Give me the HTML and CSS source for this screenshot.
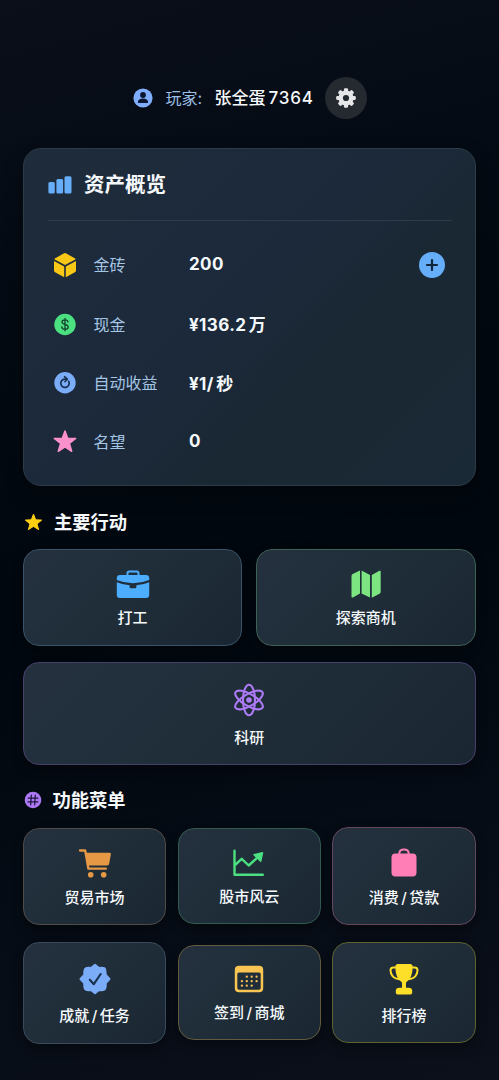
FILE: index.html
```html
<!DOCTYPE html>
<html lang="zh-CN">
<head>
<meta charset="utf-8">
<meta name="viewport" content="width=device-width, initial-scale=1">
<title>资产概览</title>
<link rel="stylesheet" href="styles.css">
</head>
<body>
<main class="screen">
  <header class="player">
    <svg class="avatar" viewBox="0 0 20 20"><circle cx="10" cy="10" r="9.6" fill="#80adfb"/><circle cx="10" cy="7" r="2.9" fill="#0b1730"/><path d="M4.900 14.200c0-2.200 2.200-3.600 5.100-3.600s5.100 1.400 5.100 3.600c0 .5-.3.7-.8.7H5.700c-.5 0-.8-.2-.8-.7z" fill="#0b1730"/></svg>
    <span class="player-label">玩家:</span>
    <span class="player-name">张全蛋<span class="player-id">7364</span></span>
    <button class="settings" aria-label="设置">
      <svg width="20" height="20" viewBox="-10 -10 20 20" fill="#e5e6e7"><path fill-rule="evenodd" d="M0-7.600A7.600 7.600 0 1 1 0 7.600A7.600 7.600 0 1 1 0-7.600zM0-3.100A3.100 3.100 0 1 0 0 3.100A3.100 3.100 0 1 0 0-3.100z"/><g id="teeth"><rect x="-2.100" y="-9.800" width="4.200" height="4" rx="1.300"/><rect x="-2.100" y="5.800" width="4.200" height="4" rx="1.300"/><rect x="-9.800" y="-2.100" width="4" height="4.200" rx="1.300"/><rect x="5.800" y="-2.100" width="4" height="4.200" rx="1.300"/></g><use href="#teeth" transform="rotate(45)"/></svg>
    </button>
  </header>

  <section class="assets">
    <h1 class="assets-title">
      <svg width="24" height="20" viewBox="0 0 24 20" fill="#66adfa"><rect x=".4" y="7" width="6.400" height="11.500" rx="1.500"/><rect x="8.400" y="4" width="6.700" height="14.500" rx="1.500"/><rect x="16.500" y="1.200" width="7" height="17.300" rx="1.500"/></svg>
      <span>资产概览</span>
    </h1>
    <div class="row row-gold">
      <svg viewBox="0 0 26 26" fill="#f9c715"><path d="M12.100 1.300q.9-.5 1.800 0l9.300 5.200q.7.500 0 .9L13 12.900 2.800 7.400q-.7-.4 0-.9z"/><path d="M2 9l10.200 5.600v10.700L3.100 20.200Q2 19.600 2 18.500zM24 9l-10.200 5.600v10.700l9.100-5.100q1.100-.6 1.100-1.700z"/></svg>
      <span class="row-label">金砖</span><span class="row-value">200</span>
      <button class="add" aria-label="增加"><svg width="26" height="26" viewBox="0 0 26 26"><path d="M13 8v10M8 13h10" stroke="#12273a" stroke-width="2.200" stroke-linecap="round"/></svg></button>
    </div>
    <div class="row row-cash">
      <svg viewBox="0 0 26 26"><circle cx="13" cy="13.500" r="10.700" fill="#4be080"/><path d="M16 10.800C15.800 9.400 14.600 8.800 13 8.800c-1.800 0-3 .8-3 2.200 0 3.400 6.200 1.500 6.200 5 0 1.500-1.300 2.300-3.200 2.300s-3.100-.9-3.300-2.400M13 7.300v12.500" fill="none" stroke="#17462f" stroke-width="1.300" stroke-linecap="round"/></svg>
      <span class="row-label">现金</span><span class="row-value">¥136.2<span class="unit">万</span></span>
    </div>
    <div class="row row-income">
      <svg viewBox="0 0 26 26"><circle cx="13" cy="12.700" r="10.700" fill="#7bacf8"/><path d="M16.700 11.300a4.200 4.200 0 1 1-4.400-2.200h2" fill="none" stroke="#18304f" stroke-width="1.700" stroke-linecap="round"/><path d="M12.500 6.700L15.300 9.200 12.900 11.700" fill="none" stroke="#18304f" stroke-width="1.600" stroke-linecap="round" stroke-linejoin="round"/></svg>
      <span class="row-label">自动收益</span><span class="row-value">¥1/<span class="unit">秒</span></span>
    </div>
    <div class="row row-fame">
      <svg viewBox="0 0 26 26"><path d="M13 2.900l2.700 7.300 8 .3-6.300 4.900 2.300 7.900-6.700-4.500-6.700 4.500 2.300-7.900-6.300-4.900 8-.3z" fill="#fb91cc" stroke="#fb91cc" stroke-width="1.500" stroke-linejoin="round"/></svg>
      <span class="row-label">名望</span><span class="row-value">0</span>
    </div>
  </section>

  <h2 class="heading heading-actions">
    <svg width="19" height="19" viewBox="0 0 19 19"><path d="M9.500 1.200l2.200 5.600 6 .3-4.700 3.800 1.700 5.800-5.200-3.300-5.200 3.300L6 10.900 1.300 7.100l6-.3z" fill="#ffcf12" stroke="#ffcf12" stroke-linejoin="round"/></svg>
    <span>主要行动</span>
  </h2>
  <div class="actions">
    <a class="tile work"><svg viewBox="0 0 34 34"><path d="M11.500 8V6.200q0-1.700 1.700-1.700h7.600q1.700 0 1.700 1.700V8" fill="none" stroke="#4dadff" stroke-width="2"/><path d="M4 8h26q3.200 0 3.200 3v1.900Q25.500 16.200 17 16.200T.8 12.900V11Q.8 8 4 8z" fill="#4dadff"/><path d="M.8 15.200Q7 17.800 13.600 18.200V20q0 1.200 1.200 1.200h4.400q1.200 0 1.200-1.200v-1.800Q27 17.800 33.200 15.200V28q0 3-3 3H3.800q-3 0-3-3z" fill="#4dadff"/></svg><span>打工</span></a>
    <a class="tile explore"><svg viewBox="0 0 34 34" fill="#7ce480"><path d="M2.500 9q0-1.400 1.200-2l7.300-3.600v23.200l-7.100 3.800q-1.400.5-1.400-1z"/><path d="M12.600 3.500L21 8v22.500l-8.400-4z"/><path d="M22.800 8l7.600-4.200q1.300-.5 1.300 1v19.900q0 1.300-1.200 2l-7.700 4z"/></svg><span>探索商机</span></a>
    <a class="tile research"><svg viewBox="0 0 34 34" fill="none" stroke="#ad7af5" stroke-width="2.100"><ellipse cx="17" cy="17" rx="6" ry="15.300"/><ellipse cx="17" cy="17" rx="6" ry="15.600" transform="rotate(60 17 17)"/><ellipse cx="17" cy="17" rx="6" ry="15.600" transform="rotate(-60 17 17)"/><circle cx="17" cy="17" r="2.800" fill="#ad7af5" stroke="none"/></svg><span>科研</span></a>
  </div>

  <h2 class="heading heading-menu">
    <svg width="18" height="18" viewBox="0 0 18 18"><circle cx="9" cy="9" r="8.300" fill="#ad79f4"/><path d="M7.300 4.200L6.700 13.800M11.300 4.200l-.6 9.600M4.200 7.100h9.800M4 10.900h9.800" stroke="#1a1438" stroke-width="1.200" stroke-linecap="round"/></svg>
    <span>功能菜单</span>
  </h2>
  <div class="menu">
    <a class="tile trade"><svg viewBox="0 0 34 34"><path d="M2 4.500h5.200l3.200 18.200h17.500" fill="none" stroke="#e69845" stroke-width="2.300" stroke-linecap="round" stroke-linejoin="round"/><path d="M7.300 6.700h24.400q1.500 0 1.200 1.600l-1.700 9.200q-.3 1.900-2 1.900H9.700z" fill="#e69845"/><circle cx="12.700" cy="28.700" r="2.800" fill="#e69845"/><circle cx="25.700" cy="28.700" r="2.800" fill="#e69845"/></svg><span>贸易市场</span></a>
    <a class="tile stocks"><svg viewBox="0 0 34 34" fill="none" stroke="#4be080" stroke-width="2.400" stroke-linecap="round" stroke-linejoin="round"><path d="M2.500 4.700v24.100h28.300M3.500 18.500l6.200-5.700 7 6.700L26 11"/><path d="M22 8.700l8.500-1.900-1.800 8.400z" fill="#4be080" stroke-width="1.500"/></svg><span>股市风云</span></a>
    <a class="tile spend"><svg viewBox="0 0 34 34"><path d="M12.300 9V7.800c0-2.700 2-4.300 4.700-4.300s4.700 1.600 4.700 4.300V9" fill="none" stroke="#ff7eb6" stroke-width="2"/><rect x="4.500" y="7.400" width="25" height="23.200" rx="4" fill="#ff7eb6"/></svg><span>消费<i>/</i>贷款</span></a>
    <a class="tile tasks"><svg viewBox="0 0 34 34"><path d="M17 2.800l4 3.300q5.500-.8 6 .9t.8 6l3.700 4-3.700 4q.2 4.300-.8 6t-6 .9l-4 3.300-4-3.300q-5 .8-6-.9t-.8-6l-3.700-4 3.700-4q-.2-4.300.8-6t6-.9z" fill="#7bacf8" stroke="#7bacf8" stroke-width="2" stroke-linejoin="round"/><path d="M11.800 17.700l4 4.500L22.700 12" fill="none" stroke="#19304b" stroke-width="2.100" stroke-linecap="round" stroke-linejoin="round"/></svg><span>成就<i>/</i>任务</span></a>
    <a class="tile checkin"><svg viewBox="0 0 34 34"><path fill-rule="evenodd" d="M7 3.800h20q4.200 0 4.200 4v18.500q0 4-4.200 4H7q-4.200 0-4.200-4V7.800q0-4 4.200-4zM6.800 10.500q-1.500 0-1.500 1.500v14q0 1.800 1.800 1.800h19.800q1.800 0 1.800-1.800V12q0-1.500-1.500-1.500z" fill="#fac552"/><path d="M14.800 14.700h9.900M9.900 19.200h14.800M9.900 23.700h9.900" stroke="#fac552" stroke-width="2.300" stroke-linecap="round" stroke-dasharray="0 4.900"/></svg><span>签到<i>/</i>商城</span></a>
    <a class="tile ranking"><svg viewBox="0 0 34 34"><path d="M9.800 5.600H6.300Q3.500 5.600 3.500 8.500C3.700 13.200 7 16.500 12 17.300M24.200 5.600h3.500q2.800 0 2.800 2.900C30.300 13.200 27 16.500 22 17.300" fill="none" stroke="#fdde28" stroke-width="2"/><path d="M11 1.900h12q2.600 0 2.600 2.500c0 7.500-1.800 12.400-5.600 15.200-1 .7-1 1.500-1 3.200v3h2.700q3.500 0 3.500 3v1.700q0 1.900-1.900 1.900H10.700q-1.900 0-1.900-1.900v-1.700q0-3 3.500-3H15v-3c0-1.700 0-2.500-1-3.200C10.200 16.800 8.400 11.900 8.400 4.400q0-2.500 2.600-2.500z" fill="#fdde28"/></svg><span>排行榜</span></a>
  </div>
</main>
</body>
</html>
```
FILE: styles.css
```css
* { box-sizing: border-box; }

body {
  margin: 0;
  font-family: Inter, "Noto Sans CJK SC", sans-serif;
  color: #f5f9fc;
  background: #02070e;
}

.screen {
  width: 499px;
  height: 1080px;
  padding: 77px 23.500px 0 23px;
  overflow: hidden;
  background: linear-gradient(165deg, #0a0f1a 0%, #050b14 20%, #01070e 52%, #060c15 78%, #0b101a 100%);
}

h1, h2 { margin: 0; }
button { padding: 0; border: 0; }
svg { display: block; flex: none; }

.player {
  display: flex;
  align-items: center;
  height: 42px;
  padding-left: 110px;
}
.avatar { width: 20px; height: 20px; }
.player-label {
  width: 49px;
  margin-left: 12.500px;
  font-size: 16px;
  line-height: 22px;
  padding-bottom: 1px;
  color: #9cbfe4;
}
.player-name {
  width: 110.500px;
  padding-bottom: 3px;
  font-size: 17px;
  font-weight: 500;
  white-space: nowrap;
}
.player-id { margin-left: 3px; letter-spacing: .8px; }
.settings {
  display: grid;
  place-items: center;
  width: 42px;
  height: 42px;
  border-radius: 50%;
  background: #252a31;
}

.assets {
  height: 338px;
  margin-top: 29px;
  padding: 0 23px 0 24px;
  border: 1px solid #2d3a47;
  border-radius: 18px;
  background: linear-gradient(135deg, #1f2c3b 0%, #1b293b 45%, #1a2833 68%, #1a2936 100%);
  box-shadow: 0 8px 20px #0005;
}
.assets-title {
  display: flex;
  align-items: center;
  gap: 12px;
  height: 72px;
  border-bottom: 1px solid #2e3d4b;
  font-size: 20.500px;
  font-weight: 700;
}
.assets-title span { padding-bottom: 3px; }
.row {
  display: grid;
  grid-template-columns: 26px 80px 1fr 26px;
  column-gap: 15.500px;
  align-items: center;
  height: 58.500px;
  padding: 0 7px 0 4px;
}
.row > svg { width: 26px; height: 26px; }
.row-gold { height: 61px; margin-top: 13px; }
.row-label { padding-bottom: 1.500px; font-size: 16px; color: #a5c5e4; }
.row-value {
  padding-bottom: 1px;
  font-size: 17px;
  font-weight: 700;
  letter-spacing: .4px;
}
.row-cash .row-label,
.row-fame .row-label { padding-bottom: 1px; }
.unit { margin-left: 2.500px; letter-spacing: 0; }
.add { border-radius: 50%; background: #66adfa; width: 26px; height: 26px; }

.heading {
  display: flex;
  align-items: center;
  height: 26px;
  font-size: 18.300px;
  font-weight: 700;
}
.heading span { padding-bottom: 2px; }
.heading-actions { gap: 11px; margin-top: 23px; padding-left: 1px; }
.heading-menu { gap: 10.500px; margin-top: 22px; padding-left: 1px; }

.actions {
  display: grid;
  grid-template-columns: 1fr 1fr;
  gap: 16px 14px;
  margin-top: 14px;
}
.menu {
  display: grid;
  grid-template-columns: repeat(3, 1fr);
  grid-template-rows: 98px 102px;
  gap: 16.500px 11.500px;
  align-items: center;
  margin-top: 14px;
}
.tile {
  display: flex;
  flex-direction: column;
  align-items: center;
  gap: 7px;
  height: 97px;
  padding-top: 17px;
  border: 1px solid #38536a;
  border-radius: 16px;
  background: linear-gradient(135deg, #24303e, #202e3a 45%, #1a2732);
  box-shadow: 0 5px 12px #0005;
  font-size: 15px;
  font-weight: 500;
  line-height: 20px;
}
.tile svg { width: 34px; height: 34px; }
.tile i { margin: 0 2.500px; font-style: normal; }

.explore { border-color: #3d6155; }
.research { grid-column: 1 / -1; height: 103px; padding-top: 20px; gap: 10.500px; border-color: #493f6b; }
.trade { gap: 8px; border-color: #514b48; }
.stocks { height: 96px; border-color: #315b50; }
.spend { height: 98px; padding-top: 18px; gap: 8px; border-color: #65465f; }
.tasks { height: 102px; padding-top: 19.500px; gap: 10px; border-color: #3b4a5b; }
.checkin { height: 95px; padding-top: 16px; gap: 7px; border-color: #635b3e; }
.ranking { height: 101px; padding-top: 18.500px; gap: 10.500px; border-color: #5d622f; }
```
